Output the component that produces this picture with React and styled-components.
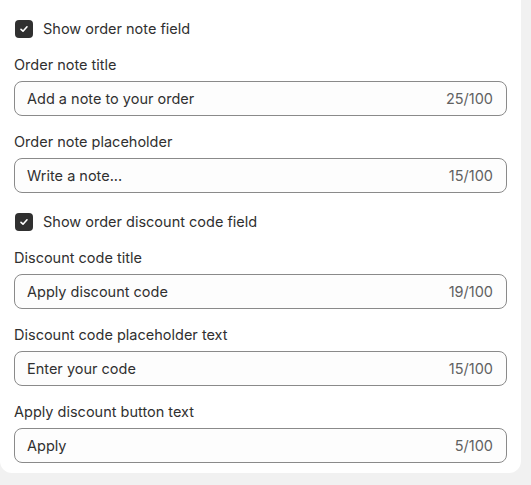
import React from "react";
import styled, { createGlobalStyle } from "styled-components";

const Global = createGlobalStyle`
  html, body { margin: 0; padding: 0; background: #f1f1f1; }
  body { font-family: Inter, "Noto Sans", sans-serif; color: #303030; }
`;

const Card = styled.div`
  width: 521px;
  box-sizing: border-box;
  background: #ffffff;
  border-radius: 0 0 12px 12px;
  padding: 19px 14px 10px 14px;
  display: flex;
  flex-direction: column;
`;

const Section = styled.div`
  display: flex;
  flex-direction: column;
  gap: 16px;
  & + & { margin-top: 19px; }
`;

const CheckRow = styled.label`
  display: flex;
  align-items: center;
  gap: 10px;
  height: 20px;
  font-size: 14.5px;
  line-height: 20px;
  color: #303030;
  padding-left: 1px;
`;

const Box = styled.span`
  width: 18px;
  height: 18px;
  border-radius: 4px;
  background: #303030;
  display: flex;
  align-items: center;
  justify-content: center;
  flex-shrink: 0;
`;

const Field = styled.div`
  display: flex;
  flex-direction: column;
  gap: 6px;
`;

const Label = styled.div`
  font-size: 14.5px;
  line-height: 20px;
  color: #303030;
`;

const InputBox = styled.div`
  height: 35px;
  box-sizing: border-box;
  border: 1px solid #8a8a8a;
  border-radius: 8px;
  background: #fdfdfd;
  display: flex;
  align-items: center;
  justify-content: space-between;
  padding: 0 13px 0 12px;
  font-size: 14.5px;
`;

const Value = styled.span`
  color: #303030;
`;

const Counter = styled.span`
  color: #616161;
`;

const Check = ({ children }) => (
  <CheckRow>
    <Box>
      <svg width="12" height="12" viewBox="0 0 12 12" fill="none">
        <path d="M3 6.3 L5 8.2 L9 3.8" stroke="#fff" strokeWidth="1.6" strokeLinecap="round" strokeLinejoin="round" />
      </svg>
    </Box>
    {children}
  </CheckRow>
);

const TextField = ({ label, value, count }) => (
  <Field>
    <Label>{label}</Label>
    <InputBox>
      <Value>{value}</Value>
      <Counter>{count}/100</Counter>
    </InputBox>
  </Field>
);

export default function App() {
  return (
    <>
      <Global />
      <Card>
        <Section>
          <Check>Show order note field</Check>
          <TextField label="Order note title" value="Add a note to your order" count={25} />
          <TextField label="Order note placeholder" value="Write a note..." count={15} />
        </Section>
        <Section>
          <Check>Show order discount code field</Check>
          <TextField label="Discount code title" value="Apply discount code" count={19} />
          <TextField label="Discount code placeholder text" value="Enter your code" count={15} />
          <TextField label="Apply discount button text" value="Apply" count={5} />
        </Section>
      </Card>
    </>
  );
}
